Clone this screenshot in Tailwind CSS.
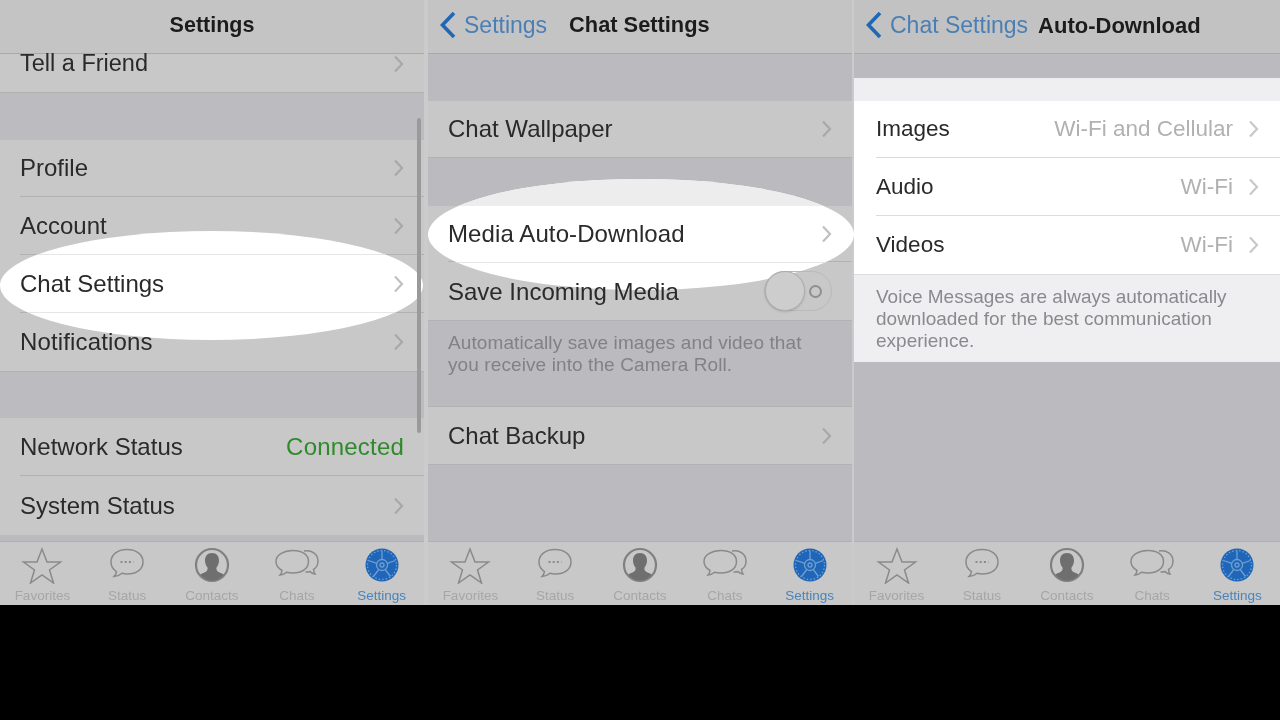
<!DOCTYPE html>
<html lang="en">
  <head>
    <meta charset="UTF-8" />
    <title>Chat Settings</title>
    <script src="https://cdn.jsdelivr.net/npm/@tailwindcss/browser@4"></script>
  </head>
  <body class="bg-black h-[720px] overflow-hidden font-['Liberation_Sans',sans-serif] text-[#2a2a2a]">
    <div class="flex h-[605px] w-[1280px] blur-[0.6px]">
      <!-- Settings -->
      <section class="relative w-[428px] h-full flex flex-col bg-[#bbbbbf] border-r-4 border-[#cbcbcb] overflow-hidden">
        <header class="h-[54px] shrink-0 bg-[#c4c4c4] border-b border-[#a9a9a9] flex items-center justify-center pb-[3px] text-[21.500px] font-bold text-[#1c1c1c]">Settings</header>
        <div class="h-[39px] bg-[#c8c8c8] pl-5 pr-5 flex items-start justify-between border-b border-[#b2b2b2] text-[23.500px]">
          <span class="relative z-[2] leading-[18px]">Tell a Friend</span>
          <svg class="mt-[1px]" width="11" height="18" viewBox="0 0 11 18" fill="none" stroke="#a8a8a8" stroke-width="2.2"><path d="M2 1.500 9 9l-7 7.500" /></svg>
        </div>
        <div class="h-[47px] bg-[#bcbcc0]"></div>
        <div class="bg-[#c8c8c8] pl-5 text-[24px]">
          <div class="h-[57px] flex items-center justify-between pr-5 border-b border-[#b2b2b2]"><span class="relative z-[2]">Profile</span><svg class="relative z-[2]" width="11" height="18" viewBox="0 0 11 18" fill="none" stroke="#a8a8a8" stroke-width="2.2"><path d="M2 1.500 9 9l-7 7.500" /></svg></div>
          <div class="h-[58px] flex items-center justify-between pr-5 border-b border-[#b2b2b2]"><span class="relative z-[2]">Account</span><svg class="relative z-[2]" width="11" height="18" viewBox="0 0 11 18" fill="none" stroke="#a8a8a8" stroke-width="2.2"><path d="M2 1.500 9 9l-7 7.500" /></svg></div>
          <div class="h-[58px] flex items-center justify-between pr-5 border-b border-[#b2b2b2]"><span class="relative z-[2]">Chat Settings</span><svg class="relative z-[2]" width="11" height="18" viewBox="0 0 11 18" fill="none" stroke="#c0c0c0" stroke-width="2.2"><path d="M2 1.500 9 9l-7 7.500" /></svg></div>
          <div class="h-[58px] flex items-center justify-between pr-5"><span class="relative z-[2] tracking-[0.15px]">Notifications</span><svg class="relative z-[2]" width="11" height="18" viewBox="0 0 11 18" fill="none" stroke="#a8a8a8" stroke-width="2.2"><path d="M2 1.500 9 9l-7 7.500" /></svg></div>
        </div>
        <div class="h-[47px] bg-[#bcbcc0] border-t border-[#b2b2b2]"></div>
        <div class="bg-[#c8c8c8] pl-5 text-[24px]">
          <div class="h-[58px] flex items-center justify-between pr-5 border-b border-[#b2b2b2]"><span>Network Status</span><span class="text-[#2f8a2b] tracking-[0.2px]">Connected</span></div>
          <div class="h-[59px] flex items-center justify-between pr-5"><span>System Status</span><svg width="11" height="18" viewBox="0 0 11 18" fill="none" stroke="#a8a8a8" stroke-width="2.2"><path d="M2 1.500 9 9l-7 7.500" /></svg></div>
        </div>
        <div data-tabs class="mt-auto"></div>
        <!-- highlight and scroll bar -->
        <div class="absolute z-[1] left-0 top-[231px] w-[423px] h-[109px] rounded-[50%] bg-white overflow-hidden">
          <div class="absolute left-5 right-0 top-[23px] h-px bg-[#e6e6e6]"></div>
          <div class="absolute left-5 right-0 top-[81px] h-px bg-[#e6e6e6]"></div>
        </div>
        <div class="absolute z-[3] left-[417px] top-[118px] w-[4px] h-[315px] rounded-full bg-[#9a9a9a]"></div>
      </section>

      <!-- Chat Settings -->
      <section class="relative w-[426px] h-full flex flex-col bg-[#bbbbbf] border-r-2 border-[#cbcbcb]">
        <header class="h-[54px] shrink-0 bg-[#c4c4c4] border-b border-[#a9a9a9] flex items-center pl-[11px] pb-[3px]">
          <svg width="18" height="28" viewBox="0 0 18 28" fill="none" stroke="#2068b4" stroke-width="3.600"><path d="M15 2 3.500 14 15 26" /></svg>
          <span class="ml-[7px] text-[23px] text-[#4a7fb6]">Settings</span>
          <span class="ml-[22px] text-[21.800px] font-bold text-[#1c1c1c]">Chat Settings</span>
        </header>
        <div class="h-[47px]"></div>
        <div class="h-[57px] bg-[#c8c8c8] px-5 flex items-center justify-between border-b border-[#b2b2b2] text-[24px]"><span>Chat Wallpaper</span><svg width="11" height="18" viewBox="0 0 11 18" fill="none" stroke="#a8a8a8" stroke-width="2.2"><path d="M2 1.500 9 9l-7 7.500" /></svg></div>
        <div class="h-[48px]"></div>
        <div class="bg-[#c8c8c8] pl-5 text-[24px] border-b border-[#b2b2b2]">
          <div class="h-[56px] flex items-center justify-between pr-5 border-b border-[#b2b2b2]"><span class="relative z-[2] tracking-[0.1px]">Media Auto-Download</span><svg class="relative z-[2]" width="11" height="18" viewBox="0 0 11 18" fill="none" stroke="#c0c0c0" stroke-width="2.2"><path d="M2 1.500 9 9l-7 7.500" /></svg></div>
          <div class="h-[58px] flex items-center justify-between pr-5">
            <span class="relative z-[2] pt-[1px]">Save Incoming Media</span>
            <div class="relative z-[2] w-[68px] h-[40px] rounded-full border border-[#b9b9b9] flex items-center justify-end pr-[9px]">
              <div class="w-[13px] h-[13px] rounded-full border-2 border-[#8f8f8f]"></div>
              <div class="absolute left-0 -top-px w-[40px] h-[40px] rounded-full bg-[#cdcdcd] border border-[#adadad] shadow"></div>
            </div>
          </div>
        </div>
        <div class="h-[85px] px-5 pt-[11px] text-[19px] tracking-[0.1px] leading-[22px] text-[#828286] whitespace-nowrap">Automatically save images and video that<br />you receive into the Camera Roll.</div>
        <div class="h-[59px] bg-[#c8c8c8] border-y border-[#b2b2b2] px-5 flex items-center justify-between text-[24px]"><span>Chat Backup</span><svg width="11" height="18" viewBox="0 0 11 18" fill="none" stroke="#a8a8a8" stroke-width="2.2"><path d="M2 1.500 9 9l-7 7.500" /></svg></div>
        <div data-tabs class="mt-auto"></div>
        <div class="absolute z-[1] left-0 top-[179px] w-[426px] h-[111px] rounded-[50%] bg-white overflow-hidden">
          <div class="h-[27px] bg-[#ededed]"></div>
          <div class="absolute left-5 right-0 top-[83px] h-px bg-[#e6e6e6]"></div>
        </div>
      </section>

      <!-- Auto-Download -->
      <section class="w-[426px] h-full flex flex-col bg-[#bbbbbf]">
        <header class="h-[54px] shrink-0 bg-[#c2c2c2] border-b border-[#a9a9a9] flex items-center pl-[11px] pb-[3px]">
          <svg width="18" height="28" viewBox="0 0 18 28" fill="none" stroke="#2068b4" stroke-width="3.600"><path d="M15 2 3.500 14 15 26" /></svg>
          <span class="ml-[7px] text-[23px] text-[#4a7fb6]">Chat Settings</span>
          <span class="ml-[10px] text-[22px] font-bold text-[#1c1c1c]">Auto-Download</span>
        </header>
        <div class="h-[24px]"></div>
        <div class="h-[23px] bg-[#efeff2]"></div>
        <div class="bg-white pl-[22px] text-[22.500px]">
          <div class="h-[57px] flex items-center justify-between pr-[21px] border-b border-[#dcdcdc]"><span>Images</span><span class="flex items-center gap-[15px] text-[#b1b1b1]">Wi-Fi and Cellular<svg width="11" height="18" viewBox="0 0 11 18" fill="none" stroke="#c8c8c8" stroke-width="2.2"><path d="M2 1.500 9 9l-7 7.500" /></svg></span></div>
          <div class="h-[58px] flex items-center justify-between pr-[21px] border-b border-[#dcdcdc]"><span>Audio</span><span class="flex items-center gap-[15px] text-[#b1b1b1]">Wi-Fi<svg width="11" height="18" viewBox="0 0 11 18" fill="none" stroke="#c8c8c8" stroke-width="2.2"><path d="M2 1.500 9 9l-7 7.500" /></svg></span></div>
          <div class="h-[58px] flex items-center justify-between pr-[21px]"><span>Videos</span><span class="flex items-center gap-[15px] text-[#b1b1b1]">Wi-Fi<svg width="11" height="18" viewBox="0 0 11 18" fill="none" stroke="#c8c8c8" stroke-width="2.2"><path d="M2 1.500 9 9l-7 7.500" /></svg></span></div>
        </div>
        <div class="h-[88px] bg-[#efeff2] border-t border-[#dcdcdc] pl-[22px] pr-5 pt-[11px] text-[19px] leading-[22px] text-[#8a8a8e] whitespace-nowrap">Voice Messages are always automatically<br />downloaded for the best communication<br />experience.</div>
        <div data-tabs class="mt-auto"></div>
      </section>
    </div>

    <template id="tabBar">
      <nav class="h-[64px] bg-[#c8c8c8] border-t border-[#b0b0b0] grid grid-cols-5 text-[13.500px] text-[#a6a6a6]">
        <div class="flex flex-col items-center pt-[4px]">
          <svg width="44" height="38" viewBox="0 0 44 38" fill="none" stroke="#8a8a8a" stroke-width="1.500"><path d="M22 3 27 16 40.500 16 29.500 24 33.500 37 22 29 10.500 37 14.500 24 3.500 16 17 16Z" /></svg>
          <span class="mt-[4px] leading-[15px]">Favorites</span>
        </div>
        <div class="flex flex-col items-center pt-[4px]">
          <svg width="44" height="38" viewBox="0 0 44 38" fill="none" stroke="#8a8a8a" stroke-width="1.500"><path d="M22 3.500C12 3.500 6 9 6 16c0 4.200 2.200 7.500 5.500 9.600-.3 2-1.200 3.500-2.500 4.900 3.500-.2 6.200-1.500 8-3.200 1.600.4 3.300.7 5 .7 10 0 16-5 16-12S32 3.500 22 3.500Z" /><path stroke-dasharray="2 2.200" stroke-width="2" d="M15.500 16h13" /></svg>
          <span class="mt-[4px] leading-[15px]">Status</span>
        </div>
        <div class="flex flex-col items-center pt-[4px]">
          <svg width="44" height="38" viewBox="0 0 44 38"><circle cx="22" cy="19" r="16" fill="none" stroke="#808080" stroke-width="2.200" /><path fill="#6f6f6f" d="M22 7c-4.800 0-7 3.500-7 7.500 0 3 1.200 5.500 2.500 7 .4 2-.2 3.500-2 4.500-2 1-4.200 1.500-5.300 2.700a15 15 0 0 0 23.600 0c-1.100-1.200-3.300-1.700-5.300-2.700-1.800-1-2.400-2.500-2-4.500 1.300-1.500 2.500-4 2.500-7C29 10.500 26.800 7 22 7Z" /></svg>
          <span class="mt-[4px] leading-[15px]">Contacts</span>
        </div>
        <div class="flex flex-col items-center pt-[4px]">
          <svg width="44" height="38" viewBox="0 0 44 38" fill="none" stroke="#8a8a8a" stroke-width="1.500"><path d="M18 4.500C9.500 4.500 1 8.500 1 15.500c0 4 2.500 7 6 9-.2 1.800-1 3.300-2 4.500 2.500-.2 5-1.300 6.500-2.700 2 .5 4.500.7 6.500.7 9 0 15.500-4.500 15.500-11.500S27 4.500 18 4.500Z" /><path d="M29 5c7.500-1.500 14 3 14 10 0 4-2 7-4.500 8.500.2 1.800.7 3.300 1.500 4.500-2-.2-4-1.300-5-2.500-1.300.4-3 .6-4.500.4" /></svg>
          <span class="mt-[4px] leading-[15px]">Chats</span>
        </div>
        <div class="flex flex-col items-center pt-[4px] text-[#4a84ba]">
          <svg width="44" height="38" viewBox="0 0 44 38"><circle cx="22" cy="19" r="16.500" fill="#1f66b8" /><g fill="none" stroke="#6f9fd2" stroke-width="1.300"><circle cx="22" cy="19" r="5.500" /><circle cx="22" cy="19" r="2" /><circle cx="22" cy="19" r="14.500" stroke-dasharray="1.500 2" /><path d="M22 13.500V5M27.200 17.300 35.500 14.500M25.200 23.500 30.500 30.500M18.800 23.500 13.500 30.500M16.800 17.300 8.500 14.500" /></g></svg>
          <span class="mt-[4px] leading-[15px]">Settings</span>
        </div>
      </nav>
    </template>

    <script>
      const tabBar = document.getElementById("tabBar");
      document.querySelectorAll("[data-tabs]").forEach((slot) => {
        slot.appendChild(tabBar.content.cloneNode(true));
      });
    </script>
  </body>
</html>
